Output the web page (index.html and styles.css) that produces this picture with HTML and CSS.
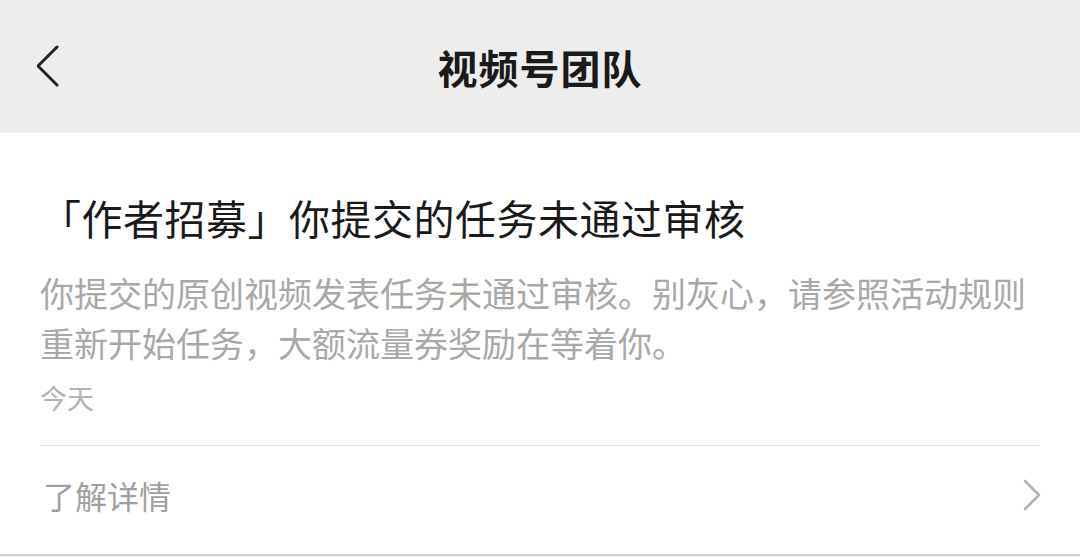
FILE: index.html
```html
<!DOCTYPE html>
<html lang="zh-CN">
<head>
<meta charset="utf-8">
<title>视频号团队</title>
<link rel="stylesheet" href="styles.css">
</head>
<body>
<header class="nav">
  <div class="nav-left">
    <svg class="back" width="24" height="44" viewBox="0 0 24 44">
      <polyline points="20,2 1,21 20,40" fill="none" stroke="#222" stroke-width="3" stroke-linecap="round" stroke-linejoin="round"/>
    </svg>
  </div>
  <h1 class="nav-title">视频号团队</h1>
  <div class="nav-right"></div>
</header>
<main class="card">
  <h2 class="card-title">「作者招募」你提交的任务未通过审核</h2>
  <p class="card-desc">你提交的原创视频发表任务未通过审核。别灰心，请参照活动规则重新开始任务，大额流量券奖励在等着你。</p>
  <div class="card-time">今天</div>
  <div class="divider"></div>
  <div class="link-row">
    <span class="link-text">了解详情</span>
    <svg class="arrow" width="20" height="32" viewBox="0 0 20 32">
      <polyline points="3,2 17,16 3,30" fill="none" stroke="#b3b3b3" stroke-width="2.6" stroke-linecap="round" stroke-linejoin="round"/>
    </svg>
  </div>
</main>
</body>
</html>
```
FILE: styles.css
```css
* { box-sizing: border-box; }
html, body {
  margin: 0;
  padding: 0;
}
body {
  background: #ededed;
  font-family: "Noto Sans CJK SC", "Noto Sans", sans-serif;
  width: 1080px;
  height: 557px;
  overflow: hidden;
}
.nav {
  height: 133px;
  background: #ededed;
  display: grid;
  grid-template-columns: 1fr auto 1fr;
  align-items: center;
}
.nav-left {
  padding-left: 37px;
  display: flex;
  align-items: center;
}
.back { display: block; }
.nav-title {
  margin: 0;
  font-size: 40px;
  font-weight: 700;
  color: #1a1a1a;
  line-height: 50px;
  letter-spacing: 1px;
}
.card {
  background: #fff;
  height: 423px;
  border-bottom: 2px solid #d6d6d6;
  padding: 59px 40px 0 40px;
}
.card-title {
  margin: 0;
  font-size: 41px;
  font-weight: 400;
  color: #1a1a1a;
  line-height: 50px;
  letter-spacing: 0.5px;
}
.card-desc {
  margin: 26px 0 0 0;
  font-size: 34px;
  line-height: 50px;
  color: #a8a8a8;
  letter-spacing: 0;
}
.card-time {
  margin-top: 10px;
  font-size: 27px;
  line-height: 40px;
  color: #b3b3b3;
}
.divider {
  margin-top: 27px;
  height: 1px;
  background: #e3e3e3;
}
.link-row {
  height: 98px;
  display: flex;
  align-items: center;
  justify-content: space-between;
  padding-left: 3px;
}
.link-text {
  font-size: 32px;
  color: #a0a0a0;
  line-height: 40px;
}
.arrow { display: block; margin-right: -2px; }
```
